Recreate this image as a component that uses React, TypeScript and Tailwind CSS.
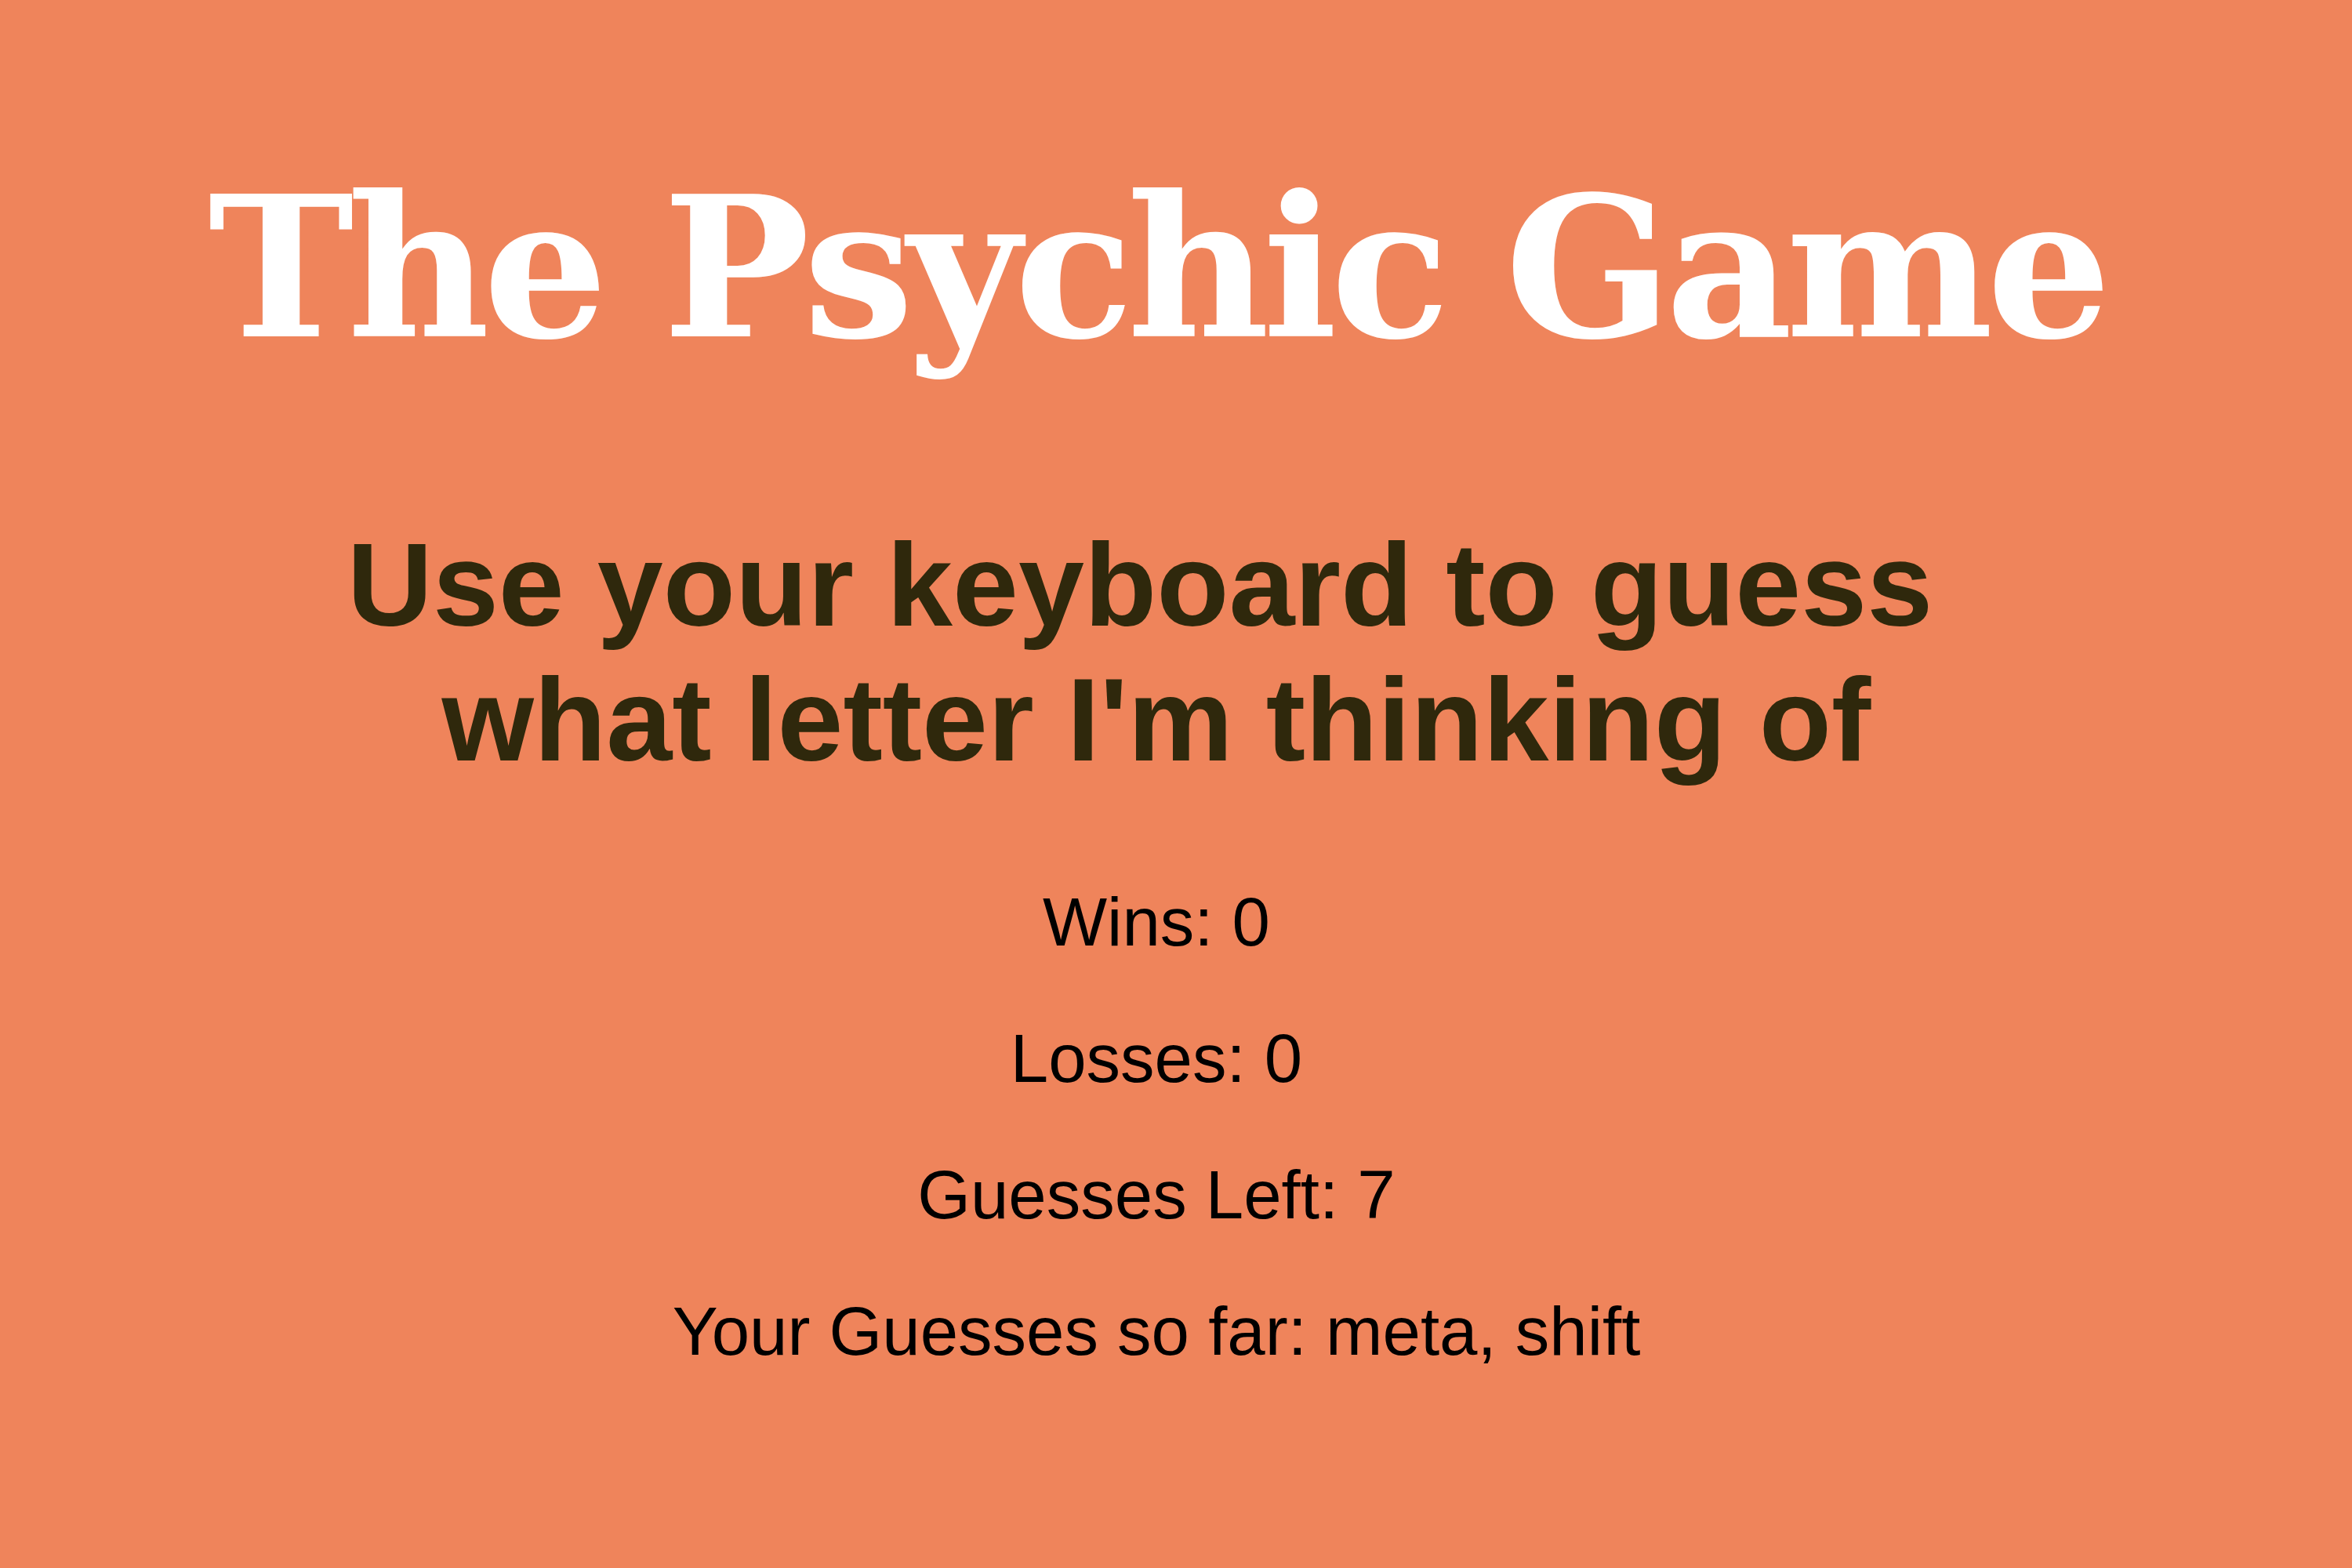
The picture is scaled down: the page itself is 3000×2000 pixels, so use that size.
import React from "react";

export default function App() {
  const stats = [
    "Wins: 0",
    "Losses: 0",
    "Guesses Left: 7",
    "Your Guesses so far: meta, shift",
  ];
  return (
    <div className="w-[3000px] h-[2000px] bg-[#ef845b] overflow-hidden pr-[50px] flex flex-col items-center text-center">
      <h1 className="mt-[216px] text-[250px] leading-none font-bold tracking-[-8.5px] text-white font-['DejaVu_Serif',serif]">
        The Psychic Game
      </h1>
      <h2 className="mt-[194px] text-[151px] leading-[172px] font-bold text-[#2f280c] font-['Liberation_Sans',Arial,sans-serif]">
        Use your keyboard to guess{"\u00a0"}
        <br />
        what letter I'm thinking of
      </h2>
      <div className="mt-[85px] flex flex-col text-[87px] leading-[174px] text-black font-['Liberation_Sans',Arial,sans-serif]">
        {stats.map((s) => (
          <p key={s}>{s}</p>
        ))}
      </div>
    </div>
  );
}
